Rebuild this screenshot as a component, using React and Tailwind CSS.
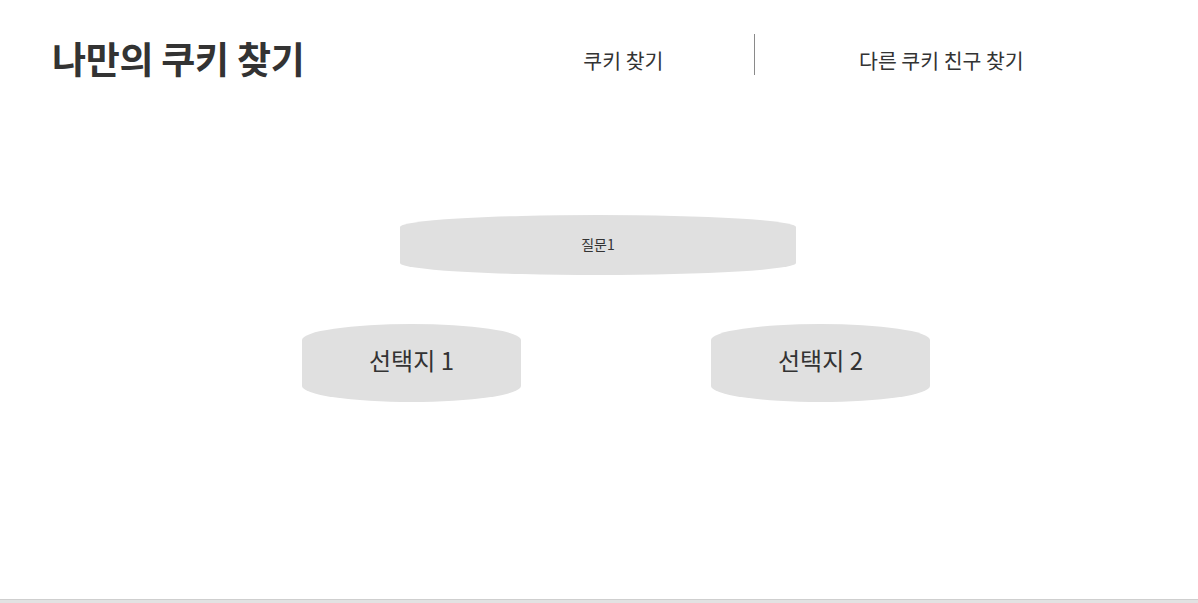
export default function App() {
  const font = { fontFamily: '"Noto Sans CJK KR", "Noto Sans", sans-serif' };
  return (
    <div className="w-[1198px] h-[603px] bg-white text-[#333] flex flex-col overflow-hidden" style={font}>
      <div className="h-[599px] flex flex-col">
        <header className="flex items-start pt-[34px]">
          <h1 className="ml-[52px] text-[37px] font-bold leading-[50px] mt-[-1px] tracking-[-0.3px]">나만의 쿠키 찾기</h1>
          <nav className="ml-[188px] flex">
            <div className="w-[262px] h-[41px] flex justify-center pt-[9px] text-[20.5px] leading-[34px]">쿠키 찾기</div>
            <div className="w-px h-[41px] bg-[#8a8a8a]"></div>
            <div className="w-[372px] h-[41px] flex justify-center pt-[9px] text-[20.5px] leading-[34px]">다른 쿠키 친구 찾기</div>
          </nav>
        </header>
        <main className="flex flex-col items-center mt-[132px]">
          <div className="w-[396px] h-[60px] bg-[#e0e0e0] rounded-[50%/12px] flex items-center justify-center text-[14px] ml-[-2px] pb-[2px]">질문1</div>
          <div className="flex gap-[190px] mt-[49px] ml-[34px]">
            <div className="w-[219px] h-[78px] bg-[#e0e0e0] rounded-[50%/16px] flex items-center justify-center text-[24px] pb-[7px]">선택지 1</div>
            <div className="w-[219px] h-[78px] bg-[#e0e0e0] rounded-[50%/16px] flex items-center justify-center text-[24px] pb-[7px]">선택지 2</div>
          </div>
        </main>
      </div>
      <footer className="h-[4px] border-t border-[#cfcfcf] bg-[#e2e2e2]"></footer>
    </div>
  );
}
